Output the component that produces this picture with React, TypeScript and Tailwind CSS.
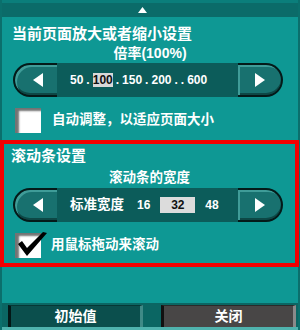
import type { ReactNode } from 'react'

function LeftArrow() {
  return (
    <svg width="10" height="14" viewBox="0 0 10 14">
      <polygon points="10,0 10,14 0,7" fill="#ffffff" />
    </svg>
  )
}

function RightArrow() {
  return (
    <svg width="10" height="14" viewBox="0 0 10 14">
      <polygon points="0,0 0,14 10,7" fill="#ffffff" />
    </svg>
  )
}

function Stepper({ className, children }: { className: string; children: ReactNode }) {
  return (
    <div className={`flex h-[34px] w-[270px] ${className}`}>
      <div className="flex w-[44px] items-center justify-center rounded-l-[17px] border-2 border-r-0 border-[#041a19] bg-[#18716f] pl-[3px] shadow-[inset_2px_2px_0_#3f9c98,inset_0_-2px_0_#0d4846]">
        <LeftArrow />
      </div>
      <div className="flex flex-1 items-center bg-[#0c5c5a] pl-[13px] text-[12px] font-bold text-white">
        {children}
      </div>
      <div className="flex w-[45px] items-center justify-center rounded-r-[17px] border-2 border-l-0 border-[#041a19] bg-[#18716f] shadow-[inset_2px_2px_0_#3f9c98,inset_0_-2px_0_#0d4846]">
        <RightArrow />
      </div>
    </div>
  )
}

function Checkbox({ checked }: { checked?: boolean }) {
  return (
    <div className="relative h-[25px] w-[26px] shrink-0 bg-white shadow-[inset_4px_3px_2px_rgba(0,0,0,0.55)]">
      {checked && (
        <svg className="absolute left-[1px] top-[-2px]" width="32" height="26" viewBox="0 0 32 26">
          <path d="M2 13 L6 10 L11 17 L27 1 L31 2 L11 25 Z" fill="#000000" />
        </svg>
      )}
    </div>
  )
}

export default function App() {
  return (
    <div className="flex h-[330px] w-[300px] flex-col border-x-2 border-[#0b6f6c] bg-[#0e9894] font-['Liberation_Sans','Noto_Sans_CJK_SC',sans-serif] text-white">
      {/* top strip with collapse arrow */}
      <div className="h-[3px] bg-[#0b7e7b]" />
      <div className="flex h-[14px] items-center justify-center bg-[#0b6b69] pr-[15px]">
        <svg width="9" height="6" viewBox="0 0 9 6">
          <polygon points="4.5,0 9,6 0,6" fill="#ffffff" />
        </svg>
      </div>

      {/* zoom section */}
      <div className="h-[27px] pl-[10px] pt-[8px] text-[15px] font-bold leading-[17px]">当前页面放大或者缩小设置</div>
      <div className="flex h-[19px] items-center justify-center text-[14px] font-bold">倍率(100%)</div>
      <Stepper className="ml-[11px]">
        <div className="flex items-center gap-[3px]">
          <span>50</span>
          <span>.</span>
          <span className="bg-[#d9d9d9] leading-[14px] text-[#111]">100</span>
          <span>.</span>
          <span>150</span>
          <span>.</span>
          <span>200</span>
          <span>.</span>
          <span>.</span>
          <span>600</span>
        </div>
      </Stepper>
      <div className="ml-[13px] mt-[10px] flex h-[26px] items-center gap-[11px]">
        <Checkbox />
        <span className="text-[13.5px] font-bold">自动调整，以适应页面大小</span>
      </div>

      {/* scrollbar section */}
      <div className="-ml-[2px] -mr-[1px] mt-[7px] border-4 border-[#f20000] pb-[5px]">
        <div className="flex h-[25px] items-center pl-[7px] text-[15px] font-bold">滚动条设置</div>
        <div className="flex h-[19px] items-center justify-center text-[13.5px] font-bold">滚动条的宽度</div>
        <Stepper className="ml-[9px]">
          <span className="text-[13.5px]">标准宽度</span>
          <span className="ml-[13px]">16</span>
          <span className="ml-[10px] flex h-[16px] w-[35px] items-center justify-center bg-[#dcdcdc] text-[#111]">32</span>
          <span className="ml-[10px]">48</span>
        </Stepper>
        <div className="ml-[11px] mt-[10px] flex h-[26px] items-center gap-[10px]">
          <Checkbox checked />
          <span className="text-[13.5px] font-bold">用鼠标拖动来滚动</span>
        </div>
      </div>

      <div className="flex-1" />

      {/* footer buttons */}
      <div className="flex h-[24px] items-end gap-[18px] bg-[#0b6663] pl-[6px]">
        <button className="flex h-[22px] w-[135px] items-center justify-center border-l-[3px] border-r-[3px] border-t border-l-[#031716] border-r-[#3f8a87] border-t-[#063836] bg-[#0b4f4d] text-[14px] font-bold text-white">
          初始值
        </button>
        <button className="flex h-[22px] w-[135px] items-center justify-center border-l-[3px] border-r-[3px] border-t border-l-[#111111] border-r-[#8a8a8a] border-t-[#2a2a2a] bg-[#484646] text-[14px] font-bold text-white">
          关闭
        </button>
      </div>
      <div className="h-[3px] bg-[#4fb3ae]" />
    </div>
  )
}
